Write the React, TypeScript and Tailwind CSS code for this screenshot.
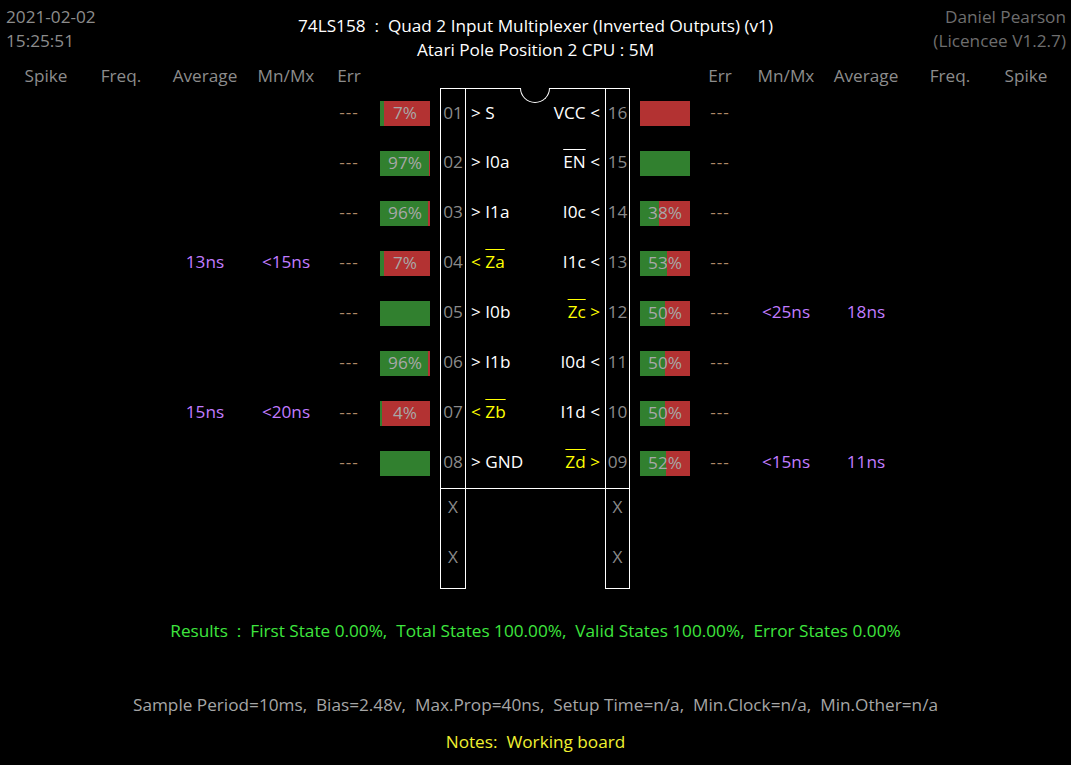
import React from "react";

type Pin = {
  num: string;
  arrow: string;
  name: string;
  bar?: boolean;
  out?: boolean;
  pct: number;
  text?: string;
  avg?: string;
  mnmx?: string;
};

const left: Pin[] = [
  { num: "01", arrow: ">", name: "S", pct: 7, text: "7%" },
  { num: "02", arrow: ">", name: "I0a", pct: 97, text: "97%" },
  { num: "03", arrow: ">", name: "I1a", pct: 96, text: "96%" },
  { num: "04", arrow: "<", name: "Za", bar: true, out: true, pct: 7, text: "7%", avg: "13ns", mnmx: "<15ns" },
  { num: "05", arrow: ">", name: "I0b", pct: 100 },
  { num: "06", arrow: ">", name: "I1b", pct: 96, text: "96%" },
  { num: "07", arrow: "<", name: "Zb", bar: true, out: true, pct: 4, text: "4%", avg: "15ns", mnmx: "<20ns" },
  { num: "08", arrow: ">", name: "GND", pct: 100 },
];

const right: Pin[] = [
  { num: "16", arrow: "<", name: "VCC", pct: 0 },
  { num: "15", arrow: "<", name: "EN", bar: true, pct: 100 },
  { num: "14", arrow: "<", name: "I0c", pct: 38, text: "38%" },
  { num: "13", arrow: "<", name: "I1c", pct: 53, text: "53%" },
  { num: "12", arrow: ">", name: "Zc", bar: true, out: true, pct: 50, text: "50%", avg: "18ns", mnmx: "<25ns" },
  { num: "11", arrow: "<", name: "I0d", pct: 50, text: "50%" },
  { num: "10", arrow: "<", name: "I1d", pct: 50, text: "50%" },
  { num: "09", arrow: ">", name: "Zd", bar: true, out: true, pct: 52, text: "52%", avg: "11ns", mnmx: "<15ns" },
];

function Bar({ pct, text }: { pct: number; text?: string }) {
  return (
    <div className="relative w-[50px] h-[25px] bg-[#b33232] flex">
      <div className="h-full bg-[#31802f]" style={{ width: `${pct}%` }} />
      {text && (
        <span className="absolute inset-0 flex items-center justify-center text-[#a8a8a8] leading-none">
          {text}
        </span>
      )}
    </div>
  );
}

function Name({ p }: { p: Pin }) {
  return <span className={p.bar ? "overline decoration-1" : ""}>{p.name}</span>;
}

function Row({ l, r, first }: { l: Pin; r: Pin; first: boolean }) {
  return (
    <div className="flex h-[50px] items-center">
      <div className="w-[80px]" />
      <div className="w-[70px]" />
      <div className="w-[98px] text-center text-[#c07cff] -mt-[2px]">{l.avg}</div>
      <div className="w-[64px] text-center text-[#c07cff] -mt-[2px]">{l.mnmx}</div>
      <div className="w-[62px] text-center text-[#b08868] tracking-[1px] -mt-[2px]">---</div>
      <Bar pct={l.pct} text={l.text} />
      <div className="w-[10px]" />
      <div className={`relative flex w-[190px] h-full ${first ? "border-t border-white" : ""}`}>
        {first && (
          <div className="absolute left-[80px] -top-px w-[30px] h-[15px] rounded-b-full border border-t-0 border-white bg-black" />
        )}
        <div className="w-[26px] border-l border-r border-white flex items-center justify-center text-[#8a8a8a] pb-[2px]">
          {l.num}
        </div>
        <div className="flex-1 flex items-center justify-between px-[5px] pb-[2px]">
          <span className={l.out ? "text-[#ffff00]" : "text-white"}>
            {l.arrow} <Name p={l} />
          </span>
          <span className={r.out ? "text-[#ffff00]" : "text-white"}>
            <Name p={r} /> {r.arrow}
          </span>
        </div>
        <div className="w-[25px] border-l border-r border-white flex items-center justify-center text-[#8a8a8a] pb-[2px]">
          {r.num}
        </div>
      </div>
      <div className="w-[10px]" />
      <Bar pct={r.pct} text={r.text} />
      <div className="w-[60px] text-center text-[#b08868] tracking-[1px] -mt-[2px]">---</div>
      <div className="w-[72px] text-center text-[#c07cff] -mt-[2px]">{r.mnmx}</div>
      <div className="w-[88px] text-center text-[#c07cff] -mt-[2px]">{r.avg}</div>
      <div className="w-[80px]" />
      <div className="w-[72px]" />
    </div>
  );
}

function EmptyRow({ last }: { last: boolean }) {
  return (
    <div className="flex h-[50px]">
      <div className="w-[434px]" />
      <div className="flex w-[190px]">
        <div className={`w-[26px] border-l border-r border-white flex items-center justify-center text-[#8a8a8a] pb-[14px] ${last ? "border-b" : ""}`}>
          X
        </div>
        <div className="flex-1" />
        <div className={`w-[25px] border-l border-r border-white flex items-center justify-center text-[#8a8a8a] pb-[14px] ${last ? "border-b" : ""}`}>
          X
        </div>
      </div>
    </div>
  );
}

export default function App() {
  return (
    <div
      className="w-[1071px] h-[765px] bg-black overflow-hidden text-[17.2px] leading-[24px]"
      style={{ fontFamily: '"Open Sans", "Noto Sans", sans-serif' }}
    >
      <div className="grid grid-cols-[1fr_auto_1fr] pt-[5px] px-[6px]">
        <div className="text-[#8c8c8c]">
          <div>2021-02-02</div>
          <div>15:25:51</div>
        </div>
        <div className="pt-[9px] text-center text-white">
          <div>74LS158&nbsp; :&nbsp; Quad 2 Input Multiplexer (Inverted Outputs) (v1)</div>
          <div>Atari Pole Position 2 CPU : 5M</div>
        </div>
        <div className="text-right text-[#6e6e6e] -mr-px">
          <div>Daniel Pearson</div>
          <div>(Licencee V1.2.7)</div>
        </div>
      </div>

      <div className="flex pl-[6px] mt-[2px] h-[24px] text-[#8c8c8c]">
        <div className="w-[80px] text-center">Spike</div>
        <div className="w-[70px] text-center">Freq.</div>
        <div className="w-[98px] text-center">Average</div>
        <div className="w-[64px] text-center">Mn/Mx</div>
        <div className="w-[62px] text-center">Err</div>
        <div className="w-[310px]" />
        <div className="w-[60px] text-center">Err</div>
        <div className="w-[72px] text-center">Mn/Mx</div>
        <div className="w-[88px] text-center">Average</div>
        <div className="w-[80px] text-center">Freq.</div>
        <div className="w-[72px] text-center">Spike</div>
      </div>

      <div className="pl-[6px]">
        {left.map((l, i) => (
          <Row key={l.num} l={l} r={right[i]} first={i === 0} />
        ))}
        <div className="flex">
          <div className="w-[434px]" />
          <div className="w-[190px] border-t border-white" />
        </div>
        <EmptyRow last={false} />
        <EmptyRow last={true} />
      </div>

      <div className="mt-[30px] text-center text-[#3ee63e]">
        Results&nbsp; :&nbsp; First State 0.00%,&nbsp; Total States 100.00%,&nbsp; Valid States 100.00%,&nbsp; Error States 0.00%
      </div>
      <div className="mt-[50px] text-center text-[#a6a6a6]">
        Sample Period=10ms,&nbsp; Bias=2.48v,&nbsp; Max.Prop=40ns,&nbsp; Setup Time=n/a,&nbsp; Min.Clock=n/a,&nbsp; Min.Other=n/a
      </div>
      <div className="mt-[13px] text-center text-[#f0f030]">Notes:&nbsp; Working board</div>
    </div>
  );
}
